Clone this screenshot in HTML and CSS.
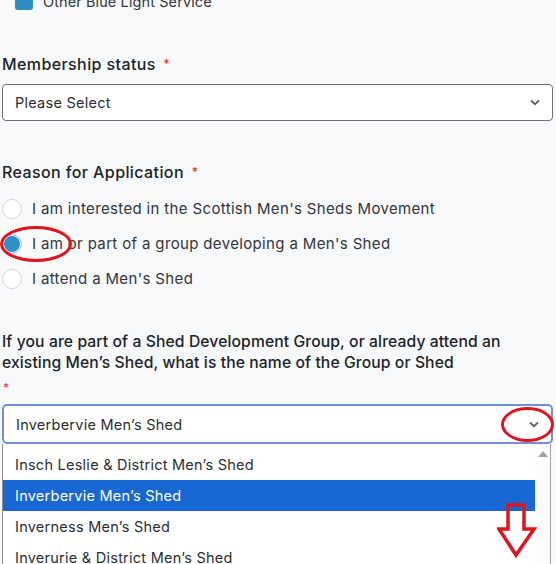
FILE: index.html
```html
<!DOCTYPE html>
<html>
<head>
<meta charset="utf-8">
<link rel="stylesheet" href="styles.css">
</head>
<body>
<div class="form">
  <label class="check-row">
    <span class="checkbox"></span>
    <span class="opt-text">Other Blue Light Service</span>
  </label>

  <div class="field field-membership">
    <div class="label">Membership status <span class="req">*</span></div>
    <div class="select">
      <span class="select-text">Please Select</span>
      <svg class="chev" width="10" height="7" viewBox="0 0 10 7"><path d="M1 1.5 L5 5.2 L9 1.5" fill="none" stroke="#5f6166" stroke-width="1.8"/></svg>
    </div>
  </div>

  <div class="field field-reason">
    <div class="label">Reason for Application <span class="req">*</span></div>
    <div class="radios">
      <div class="radio-row"><span class="radio"></span><span class="radio-text">I am interested in the Scottish Men's Sheds Movement</span></div>
      <div class="radio-row"><span class="radio checked"></span><span class="radio-text">I am or part of a group developing a Men's Shed</span><span class="ring ring-radio"></span></div>
      <div class="radio-row"><span class="radio"></span><span class="radio-text">I attend a Men's Shed</span></div>
    </div>
  </div>

  <div class="field field-shed">
    <div class="label long">If you are part of a Shed Development Group, or already attend an existing Men’s Shed, what is the name of the Group or Shed</div>
    <div class="req req-line">*</div>
    <div class="select focus">
      <span class="select-text">Inverbervie Men’s Shed</span>
      <svg class="chev" width="10" height="7" viewBox="0 0 10 7"><path d="M1 1.5 L5 5.2 L9 1.5" fill="none" stroke="#5f6166" stroke-width="1.8"/></svg>
      <span class="ring ring-chev"></span>
    </div>
    <div class="listbox">
      <div class="options">
        <div class="option">Insch Leslie &amp; District Men’s Shed</div>
        <div class="option selected">Inverbervie Men’s Shed</div>
        <div class="option">Inverness Men’s Shed</div>
        <div class="option">Inverurie &amp; District Men’s Shed</div>
      </div>
      <div class="scrollbar">
        <svg width="10" height="6" viewBox="0 0 10 6"><path d="M5 0 L10 6 L0 6 Z" fill="#a3a3a3"/></svg>
      </div>
      <svg class="big-arrow" width="40" height="58" viewBox="0 0 40 58"><path d="M11 3 H27 V27 H37 L19 53 L2 27 H11 Z" fill="none" stroke="#e0141e" stroke-width="3.5" stroke-linejoin="miter"/></svg>
    </div>
  </div>
</div>
</body>
</html>
```

FILE: styles.css
```css
html, body {
  margin: 0;
  padding: 0;
  background: #f8f9fb;
  overflow: hidden;
}
body {
  width: 556px;
  height: 564px;
  font-family: "Inter", "Open Sans", sans-serif;
  color: #22252a;
}
.form {
  padding: 0 3px 0 2px;
  margin-top: -9px;
}
.check-row {
  display: flex;
  align-items: center;
  gap: 10px;
  padding-left: 13px;
  height: 20px;
}
.checkbox {
  width: 18px;
  height: 18px;
  border-radius: 3px;
  background: #2b8fc6;
}
.opt-text {
  font-size: 14.5px;
  color: #33363b;
  letter-spacing: 0.1px;
}
.label {
  font-size: 16px;
  font-weight: 500;
  color: #202327;
  letter-spacing: 0.4px;
}
.req {
  color: #d43a2a;
  font-size: 12px;
  margin-left: 3px;
  vertical-align: 2px;
}
.field-membership {
  margin-top: 42px;
}
.field-membership .label {
  height: 22px;
  line-height: 22px;
}
.select {
  position: relative;
  margin-top: 9px;
  height: 35px;
  border: 1px solid #6d6f73;
  border-radius: 4px;
  background: #fff;
  display: flex;
  align-items: center;
  justify-content: space-between;
  padding: 0 12px 0 12px;
}
.select-text {
  font-size: 14.5px;
  color: #2b2e33;
  letter-spacing: 0.25px;
}
.field-reason {
  margin-top: 40px;
}
.field-reason .label {
  height: 22px;
  line-height: 22px;
}
.radios {
  margin-top: 8px;
}
.radio-row {
  position: relative;
  display: flex;
  align-items: center;
  gap: 10px;
  height: 35px;
}
.radio-text {
  font-size: 15px;
  color: #33363b;
  letter-spacing: 0.35px;
}
.radio {
  width: 18px;
  height: 18px;
  border: 1.5px solid #d3d6da;
  border-radius: 50%;
  background: #fff;
  margin-left: 0;
  box-sizing: content-box;
  flex: none;
}
.radio.checked {
  background: #2f8fc9;
  border-color: #c9d6e0;
  box-shadow: inset 0 0 0 1px #fff;
}
.ring {
  position: absolute;
  box-sizing: border-box;
  border: 3px solid #e0141e;
  border-radius: 50%;
  pointer-events: none;
}
.ring-radio {
  left: -2px;
  top: 0;
  width: 72px;
  height: 36px;
}
.field-shed {
  margin-top: 35px;
}
.label.long {
  font-size: 15.7px;
  line-height: 21px;
  letter-spacing: 0.1px;
}
.req-line {
  margin: 6px 0 0 1px;
  height: 18px;
  line-height: 18px;
}
.select.focus {
  margin-top: 7px;
  height: 36px;
  border: 2px solid #7190d9;
  border-radius: 5px;
}
.ring-chev {
  right: -3px;
  top: 1px;
  width: 53px;
  height: 35px;
}
.listbox {
  position: relative;
  display: flex;
  border-left: 1px solid #8a8c90;
  border-right: 1px solid #a0a2a6;
  background: #fff;
  height: 130px;
  margin-right: 2px;
  padding-top: 5px;
}
.options {
  flex: 1;
}
.option {
  height: 31px;
  line-height: 31px;
  padding-left: 12px;
  font-size: 14.5px;
  color: #2b2e33;
  letter-spacing: 0.25px;
}
.option.selected {
  background: #1967d2;
  color: #fff;
}
.scrollbar {
  width: 15px;
  margin-top: -5px;
  background: #fcfcfc;
  display: flex;
  justify-content: center;
  padding-top: 7px;
}
.big-arrow {
  position: absolute;
  left: 494px;
  top: 58px;
}
```
